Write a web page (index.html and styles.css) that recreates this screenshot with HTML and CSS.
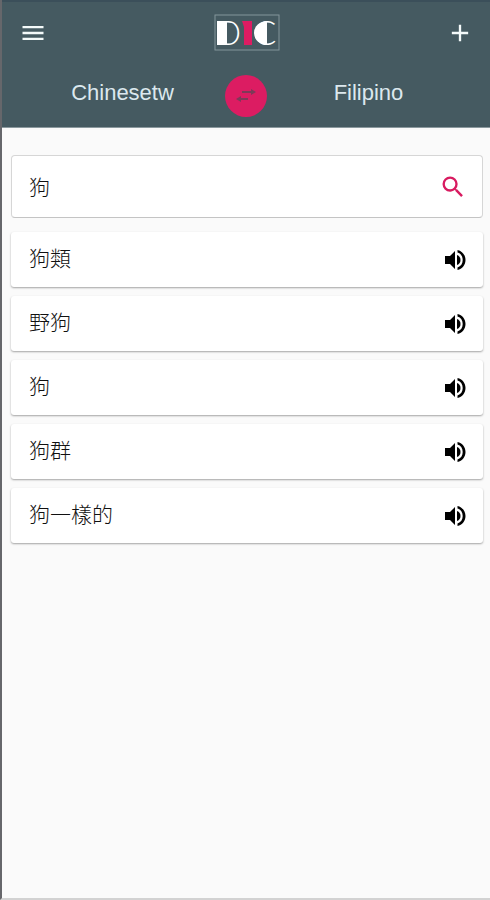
FILE: index.html
```html
<!DOCTYPE html>
<html lang="zh-Hant">
<head>
  <meta charset="UTF-8">
  <meta name="viewport" content="width=device-width, initial-scale=1">
  <title>DIC</title>
  <link rel="stylesheet" href="styles.css">
</head>
<body>
  <svg class="sprite" aria-hidden="true">
    <symbol id="volume" viewBox="0 0 24 24">
      <path d="M2 8v8h5l5 5V3L7 8H2z"/>
      <path d="M14 7v10c2.400-.8 3.500-2.700 3.500-5s-1.100-4.200-3.500-5z"/>
      <path d="M14.500 2v2.600c3.400 1 5.200 3.900 5.200 7.400s-1.800 6.400-5.200 7.400V22c4.800-1.100 8-5.100 8-10s-3.200-8.900-8-10z"/>
    </symbol>
  </svg>

  <header class="header">
    <div class="toolbar">
      <button class="icon-button" type="button" aria-label="Menu">
        <svg width="28" height="28" viewBox="0 0 24 24"><path d="M3 18h18v-2H3v2zm0-5h18v-2H3v2zm0-7v2h18V6H3z"/></svg>
      </button>
      <a class="logo" href="#" aria-label="DIC">
        <svg width="66" height="42" viewBox="0 -3 66 42">
          <rect class="logo-frame" x="1" y="0" width="64" height="35"/>
          <rect x="3" y="6" width="10" height="24"/>
          <text x="2" y="30">D</text>
          <path class="logo-pink" d="M28 6h10v24h-8V12z"/>
          <text class="logo-pink" x="29" y="30">I</text>
          <path d="M53 6a13 12 0 0 0 0 24z"/>
          <text x="40" y="30">C</text>
        </svg>
      </a>
      <button class="icon-button" type="button" aria-label="Add">
        <svg width="28" height="28" viewBox="0 0 24 24"><path d="M19 13h-6v6h-2v-6H5v-2h6V5h2v6h6v2z"/></svg>
      </button>
    </div>

    <div class="languages">
      <button class="language" type="button">Chinesetw</button>
      <button class="swap" type="button" aria-label="Swap languages">
        <svg width="24" height="16" viewBox="0 0 24 16">
          <path d="M8 3h9V1l5 3-5 3V5H8z"/>
          <path d="M14 12H7v2l-5-3 5-3v2h7z"/>
        </svg>
      </button>
      <button class="language" type="button">Filipino</button>
    </div>
  </header>

  <main class="content">
    <form class="search">
      <input class="search-input" type="text" value="狗" aria-label="Search">
      <button class="icon-button search-button" type="button" aria-label="Search">
        <svg width="28" height="28" viewBox="0 0 24 24"><path d="M15.500 14h-.79l-.28-.27A6.470 6.470 0 0 0 16 9.500 6.500 6.500 0 1 0 9.500 16c1.610 0 3.090-.59 4.230-1.570l.27.28v.79l5 4.990L20.490 19l-4.990-5zm-6 0a4.500 4.500 0 1 1 0-9 4.500 4.500 0 0 1 0 9z"/></svg>
      </button>
    </form>

    <ul class="results">
      <li class="result">
        <span>狗類</span>
        <button class="icon-button" type="button" aria-label="Listen"><svg width="24" height="24"><use href="#volume"/></svg></button>
      </li>
      <li class="result">
        <span>野狗</span>
        <button class="icon-button" type="button" aria-label="Listen"><svg width="24" height="24"><use href="#volume"/></svg></button>
      </li>
      <li class="result">
        <span>狗</span>
        <button class="icon-button" type="button" aria-label="Listen"><svg width="24" height="24"><use href="#volume"/></svg></button>
      </li>
      <li class="result">
        <span>狗群</span>
        <button class="icon-button" type="button" aria-label="Listen"><svg width="24" height="24"><use href="#volume"/></svg></button>
      </li>
      <li class="result">
        <span>狗一樣的</span>
        <button class="icon-button" type="button" aria-label="Listen"><svg width="24" height="24"><use href="#volume"/></svg></button>
      </li>
    </ul>
  </main>
</body>
</html>
```
FILE: styles.css
```css
* {
  box-sizing: border-box;
}

body {
  margin: 0;
  min-height: 100vh;
  border-left: 2px solid #66676b;
  border-bottom: 2px solid #d2d2d2;
  background-color: #fafafa;
  color: #111;
  font-family: "Liberation Sans", "Noto Sans CJK TC", sans-serif;
  font-size: 21px;
}

.sprite {
  display: none;
}

.header {
  margin-left: -2px;
  border-left: 2px solid #2b3a46;
  border-top: 2px solid #3b4f5a;
  border-bottom: 1px solid #8b999e;
  background-color: #455a61;
}

.toolbar {
  display: grid;
  grid-template-columns: 1fr auto 1fr;
  align-items: center;
  height: 61px;
  padding: 0 16px 0 17px;
}

.icon-button {
  display: flex;
  padding: 0;
  border: none;
  background: none;
  cursor: pointer;
}

.icon-button svg {
  fill: currentColor;
}

.toolbar .icon-button {
  color: #f4fafa;
}

.toolbar .icon-button:last-child {
  justify-self: end;
}

.logo {
  display: flex;
}

.logo svg {
  overflow: visible;
  fill: #fff;
  font-family: Lato, sans-serif;
  font-size: 33px;
  font-weight: 300;
}

.logo .logo-frame {
  fill: none;
  stroke: #84959b;
}

.logo .logo-pink {
  fill: #dc1c62;
}

.languages {
  display: grid;
  grid-template-columns: 1fr 42px 1fr;
  align-items: center;
  height: 64px;
  padding-top: 2px;
}

.language {
  padding: 0 0 6px;
  border: none;
  background: none;
  color: #dce8ee;
  font-family: inherit;
  font-size: 22px;
  cursor: pointer;
}

.language:first-child {
  padding-left: 18px;
}

.language:last-child {
  padding-right: 20px;
}

.swap {
  display: flex;
  align-items: center;
  justify-content: center;
  width: 42px;
  height: 42px;
  padding: 0;
  border: none;
  border-radius: 50%;
  background-color: #dc1c62;
  cursor: pointer;
}

.swap svg {
  fill: #7d3a58;
}

.content {
  padding: 27px 7px 28px 9px;
}

.search {
  display: flex;
  align-items: center;
  height: 63px;
  padding: 0 15px 0 17px;
  border: 1px solid #d6d6d6;
  border-bottom-color: #c4c4c4;
  border-radius: 4px;
  background-color: #fff;
}

.search-input {
  flex: 1;
  min-width: 0;
  padding: 0 0 2px;
  border: none;
  outline: none;
  background: none;
  color: inherit;
  font-family: inherit;
  font-size: 21px;
  font-weight: 300;
}

.search-button {
  color: #d81b60;
}

.results {
  display: flex;
  flex-direction: column;
  gap: 9px;
  margin: 14px 0 0;
  padding: 0;
  list-style: none;
}

.result {
  display: flex;
  align-items: center;
  justify-content: space-between;
  height: 55px;
  padding: 0 16px 0 18px;
  border-radius: 3px;
  background-color: #fff;
  box-shadow: 0 1px 2px rgba(0, 0, 0, 0.35);
  font-weight: 300;
}

.result span {
  padding-bottom: 5px;
}

.result .icon-button {
  color: #000;
}
```
